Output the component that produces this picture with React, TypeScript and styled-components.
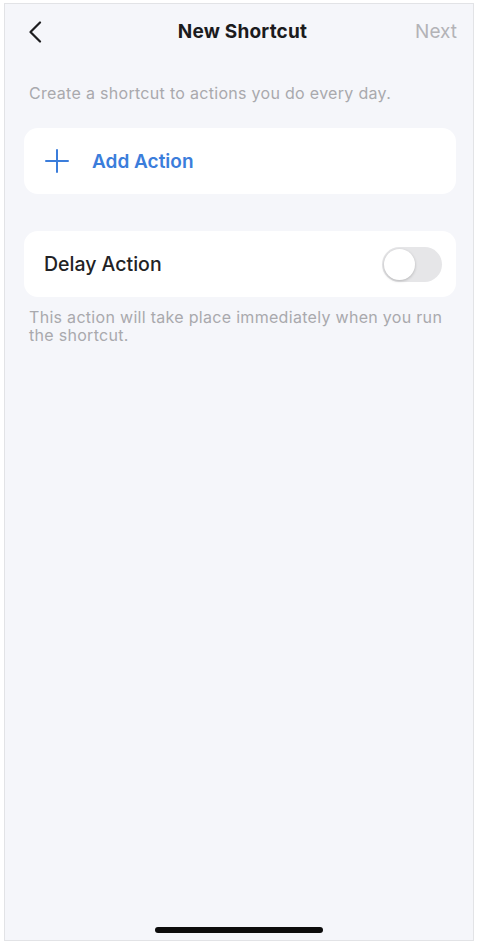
import React, { useState } from 'react'
import styled, { createGlobalStyle } from 'styled-components'

const GlobalStyle = createGlobalStyle`
  html, body {
    margin: 0;
    padding: 0;
    background: #ffffff;
  }
  * {
    box-sizing: border-box;
  }
  body {
    font-family: Inter, "Noto Sans", "Liberation Sans", sans-serif;
    -webkit-font-smoothing: antialiased;
  }
`;

const Page = styled.div`
  width: 478px;
  height: 945px;
  padding: 3px 4px 4px 4px;
`;

const Phone = styled.div`
  position: relative;
  height: 938px;
  background: #f5f6fa;
  border: 1px solid #e2e3e6;
  display: flex;
  flex-direction: column;
`;

const NavBar = styled.div`
  height: 55px;
  display: grid;
  grid-template-columns: 80px 1fr 80px;
  align-items: center;
  padding: 0 16px 0 23px;
`;

const BackButton = styled.button`
  border: none;
  background: none;
  padding: 0;
  width: 24px;
  height: 28px;
  display: flex;
  align-items: center;
  cursor: pointer;
`;

const Title = styled.div`
  text-align: center;
  font-size: 19px;
  font-weight: 700;
  color: #1b1b1d;
  letter-spacing: 0.2px;
`;

const NextButton = styled.div`
  text-align: right;
  font-size: 19px;
  color: #b3b3b7;
`;

const Content = styled.div`
  padding: 25px 17px 0 19px;
  display: flex;
  flex-direction: column;
`;

const Hint = styled.p<{ $top?: number }>`
  margin: ${p => p.$top ?? 0}px 5px 0 5px;
  font-size: 16px;
  line-height: 18px;
  letter-spacing: 0.3px;
  color: #a9a9ad;
`;

const Card = styled.div<{ $top: number }>`
  margin-top: ${p => p.$top}px;
  height: 66px;
  background: #ffffff;
  border-radius: 14px;
  display: flex;
  align-items: center;
  padding: 0 14px 0 20px;
`;

const AddLabel = styled.span`
  margin-left: 22px;
  font-size: 19px;
  font-weight: 600;
  color: #3b7ddb;
`;

const RowLabel = styled.span`
  flex: 1;
  font-size: 19.5px;
  font-weight: 500;
  color: #222225;
`;

const Track = styled.button<{ $on: boolean }>`
  position: relative;
  width: 60px;
  height: 35px;
  border: none;
  border-radius: 18px;
  padding: 0;
  background: ${p => (p.$on ? '#34c759' : '#e6e6e8')};
  cursor: pointer;
`;

const Knob = styled.span<{ $on: boolean }>`
  position: absolute;
  top: 2px;
  left: ${p => (p.$on ? '27px' : '2px')};
  width: 31px;
  height: 31px;
  border-radius: 50%;
  background: #ffffff;
  box-shadow: 0 1px 3px rgba(0, 0, 0, 0.22);
`;

const Spacer = styled.div`
  flex: 1;
`;

const HomeBar = styled.div`
  align-self: center;
  width: 168px;
  height: 6px;
  border-radius: 3px;
  background: #0c0c0c;
  margin-bottom: 7px;
`;

const App = () => {
  const [delay, setDelay] = useState(false)

  return (
    <Page>
      <GlobalStyle />
      <Phone>
        <NavBar>
          <BackButton aria-label="Back">
            <svg width="14" height="22" viewBox="0 0 14 22" fill="none">
              <path d="M12 1.5 L2.5 11 L12 20.5" stroke="#1d1d1f" strokeWidth="2.2" strokeLinecap="round" strokeLinejoin="round" />
            </svg>
          </BackButton>
          <Title>New Shortcut</Title>
          <NextButton>Next</NextButton>
        </NavBar>

        <Content>
          <Hint>Create a shortcut to actions you do every day.</Hint>

          <Card $top={26}>
            <svg width="26" height="26" viewBox="0 0 26 26" fill="none">
              <path d="M13 2 V24 M2 13 H24" stroke="#3b7ddb" strokeWidth="2" strokeLinecap="round" />
            </svg>
            <AddLabel>Add Action</AddLabel>
          </Card>

          <Card $top={37}>
            <RowLabel>Delay Action</RowLabel>
            <Track $on={delay} onClick={() => setDelay(!delay)} aria-label="Delay Action">
              <Knob $on={delay} />
            </Track>
          </Card>

          <Hint $top={11}>
            This action will take place immediately when you run the shortcut.
          </Hint>
        </Content>

        <Spacer />
        <HomeBar />
      </Phone>
    </Page>
  )
}

export default App
